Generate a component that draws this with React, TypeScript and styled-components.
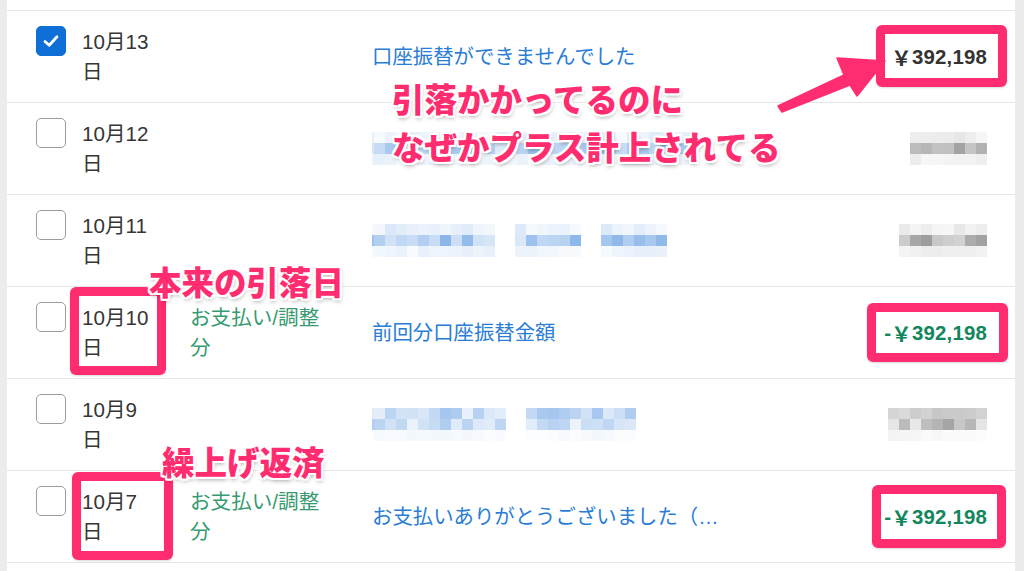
import React from 'react';
import styled, { createGlobalStyle } from 'styled-components';

const GlobalStyle = createGlobalStyle`
  html, body { margin: 0; padding: 0; background: #ffffff; }
  body { font-family: "Liberation Sans", "Noto Sans CJK JP", sans-serif; }
  * { box-sizing: border-box; }
`;

const PINK = '#ff2d6f';

const Page = styled.div`
  position: relative;
  width: 1024px;
  height: 571px;
  overflow: hidden;
  background: #ebecee;
  padding: 0 9px 0 7px;
`;

const List = styled.div`
  height: 100%;
  background: #ffffff;
  display: flex;
  flex-direction: column;
`;

const TopEdge = styled.div`
  flex: none;
  height: 11px;
  border-bottom: 1px solid #e7e7e7;
`;

const Row = styled.div`
  flex: none;
  height: 92px;
  border-bottom: 1px solid #e7e7e7;
  display: flex;
  align-items: center;
  padding: 15px 28px 15px 29px;
`;

const Box = styled.span<{ $checked?: boolean }>`
  flex: none;
  align-self: flex-start;
  width: 30px;
  height: 30px;
  margin-right: 16px;
  border-radius: 5px;
  display: flex;
  align-items: center;
  justify-content: center;
  background: ${(p) => (p.$checked ? '#0e6fd6' : '#ffffff')};
  border: ${(p) => (p.$checked ? '1px solid #0e6fd6' : '1.5px solid #9d9d9d')};
`;

const Cell = styled.div`
  font-size: 20.6px;
  line-height: 30px;
  display: flex;
  flex-direction: column;
`;

const DateCell = styled(Cell)`
  flex: none;
  width: 108px;
  color: #363636;
`;

const CategoryCell = styled(Cell)`
  flex: none;
  width: 182px;
  color: #379a70;
`;

const DescCell = styled.div`
  flex: 1 1 auto;
  min-width: 0;
  max-width: 350px;
  font-size: 20.4px;
  line-height: 30px;
  color: #2a7dd6;
  white-space: nowrap;
  overflow: hidden;
  display: flex;
`;

const AmountCell = styled.div<{ $tone: 'plain' | 'minus' }>`
  margin-left: auto;
  flex: none;
  font-size: 20.4px;
  line-height: 30px;
  font-weight: 700;
  text-align: right;
  color: ${(p) => (p.$tone === 'minus' ? '#12865c' : '#333333')};
  letter-spacing: 0.2px;
  display: flex;
`;

const Yen = styled.span`
  font-family: "Noto Sans CJK JP", sans-serif;
  font-weight: 700;
`;

const Blur = styled.div<{ $shift: number }>`
  display: flex;
  gap: 20px;
  margin-left: ${(p) => p.$shift}px;
`;

const BlurGroup = styled.div<{ $cols: number }>`
  display: grid;
  grid-template-columns: repeat(${(p) => p.$cols}, 11px);
  grid-auto-rows: 11px;
`;

const Pix = styled.span``;

const Overlay = styled.div`
  position: absolute;
  inset: 0;
  pointer-events: none;
`;

const Frame = styled.div<{ $x: number; $y: number; $w: number; $h: number }>`
  position: absolute;
  left: ${(p) => p.$x}px;
  top: ${(p) => p.$y}px;
  width: ${(p) => p.$w}px;
  height: ${(p) => p.$h}px;
  border: 9px solid ${PINK};
  border-radius: 6px;
  box-shadow: 0 1px 2px rgba(0, 0, 0, 0.15);
`;

const Callout = styled.div<{ $x: number; $y: number }>`
  position: absolute;
  left: ${(p) => p.$x}px;
  top: ${(p) => p.$y}px;
  font-family: "Noto Sans CJK JP", sans-serif;
  font-weight: 900;
  font-size: 32.5px;
  line-height: 1;
  color: ${PINK};
  white-space: nowrap;
  text-shadow:
    2px 0 0 #fff, -2px 0 0 #fff, 0 2px 0 #fff, 0 -2px 0 #fff,
    2px 2px 0 #fff, -2px -2px 0 #fff, 2px -2px 0 #fff, -2px 2px 0 #fff,
    1px 3px 4px rgba(0, 0, 0, 0.35);
`;

const ArrowSvg = styled.svg`
  position: absolute;
  left: 0;
  top: 0;
`;

function rng(seed: number) {
  let a = seed >>> 0;
  return () => {
    a = (a + 0x6d2b79f5) >>> 0;
    let t = a;
    t = Math.imul(t ^ (t >>> 15), t | 1);
    t ^= t + Math.imul(t ^ (t >>> 7), t | 61);
    return ((t ^ (t >>> 14)) >>> 0) / 4294967296;
  };
}

type Tone = 'blue' | 'gray';

function Pixelated({ groups, rows, tone, seed, shift = 0 }: { groups: number[]; rows: number[]; tone: Tone; seed: number; shift?: number }) {
  const r = rng(seed);
  const rgb = tone === 'blue' ? '40,120,215' : '95,95,95';
  return (
    <Blur $shift={shift}>
      {groups.map((cols, gi) => (
        <BlurGroup key={gi} $cols={cols}>
          {rows.flatMap((base, ri) =>
            Array.from({ length: cols }, (_, ci) => {
              const a = Math.min(0.75, base * (0.35 + r() * 1.1));
              return <Pix key={`${ri}-${ci}`} style={{ background: `rgba(${rgb},${a.toFixed(3)})` }} />;
            })
          )}
        </BlurGroup>
      ))}
    </Blur>
  );
}

const Check = () => (
  <svg width="20" height="20" viewBox="0 0 20 20">
    <path d="M4 10.5 L8.2 14.3 L16 5.8" fill="none" stroke="#fff" strokeWidth="2.8" strokeLinecap="round" strokeLinejoin="round" />
  </svg>
);

type Entry = {
  date: string;
  checked?: boolean;
  category?: [string, string];
  desc?: string;
  descBlur?: { groups: number[]; rows: number[]; seed: number };
  amount?: { text: string; tone: 'plain' | 'minus' };
  amountBlur?: { cols: number; rows: number[]; seed: number };
};

const entries: Entry[] = [
  { date: '10月13', checked: true, desc: '口座振替ができませんでした', amount: { text: '392,198', tone: 'plain' } },
  { date: '10月12', descBlur: { groups: [30], rows: [0.1, 0.35, 0.08], seed: 3 }, amountBlur: { cols: 7, rows: [0.12, 0.45, 0.1], seed: 11 } },
  { date: '10月11', descBlur: { groups: [12, 6, 6], rows: [0.12, 0.38, 0.08], seed: 7 }, amountBlur: { cols: 8, rows: [0.12, 0.5, 0.1], seed: 17 } },
  { date: '10月10', category: ['お支払い/調整', '分'], desc: '前回分口座振替金額', amount: { text: '392,198', tone: 'minus' } },
  { date: '10月9', descBlur: { groups: [13, 10], rows: [0.3, 0.25, 0.04], seed: 23 }, amountBlur: { cols: 9, rows: [0.45, 0.4, 0.05], seed: 29 } },
  { date: '10月7', category: ['お支払い/調整', '分'], desc: 'お支払いありがとうございました（…', amount: { text: '392,198', tone: 'minus' } },
];

export default function App() {
  return (
    <>
      <GlobalStyle />
      <Page>
        <List>
          <TopEdge />
          {entries.map((e, i) => (
            <Row key={i}>
              <Box $checked={e.checked}>{e.checked && <Check />}</Box>
              <DateCell>
                <span>{e.date}</span>
                <span>日</span>
              </DateCell>
              <CategoryCell>
                {e.category && (
                  <>
                    <span>{e.category[0]}</span>
                    <span>{e.category[1]}</span>
                  </>
                )}
              </CategoryCell>
              <DescCell>
                {e.desc}
                {e.descBlur && <Pixelated groups={e.descBlur.groups} rows={e.descBlur.rows} tone="blue" seed={e.descBlur.seed} shift={-9} />}
              </DescCell>
              <AmountCell $tone={e.amount ? e.amount.tone : 'plain'}>
                {e.amount && (
                  <>
                    {e.amount.tone === 'minus' && <span>-</span>}
                    <Yen>￥</Yen>
                    <span>{e.amount.text}</span>
                  </>
                )}
                {e.amountBlur && <Pixelated groups={[e.amountBlur.cols]} rows={e.amountBlur.rows} tone="gray" seed={e.amountBlur.seed} shift={0} />}
              </AmountCell>
            </Row>
          ))}
        </List>
        <Overlay>
          <Frame $x={876} $y={25} $w={131} $h={62} />
          <Frame $x={867} $y={303} $w={141} $h={59} />
          <Frame $x={872} $y={485} $w={134} $h={63} />
          <Frame $x={70} $y={287} $w={96} $h={88} />
          <Frame $x={72} $y={472} $w={101} $h={88} />
          <ArrowSvg width="1024" height="571" viewBox="0 0 1024 571">
            <polygon
              points="778,106 844,75 837,58 885,61 857,96 850,85 782,112"
              fill={PINK}
              stroke={PINK}
              strokeWidth="1.5"
              strokeLinejoin="round"
            />
          </ArrowSvg>
          <Callout $x={392} $y={82}>引落かかってるのに</Callout>
          <Callout $x={392} $y={130}>なぜかプラス計上されてる</Callout>
          <Callout $x={149} $y={265}>本来の引落日</Callout>
          <Callout $x={162} $y={445}>繰上げ返済</Callout>
        </Overlay>
      </Page>
    </>
  );
}
